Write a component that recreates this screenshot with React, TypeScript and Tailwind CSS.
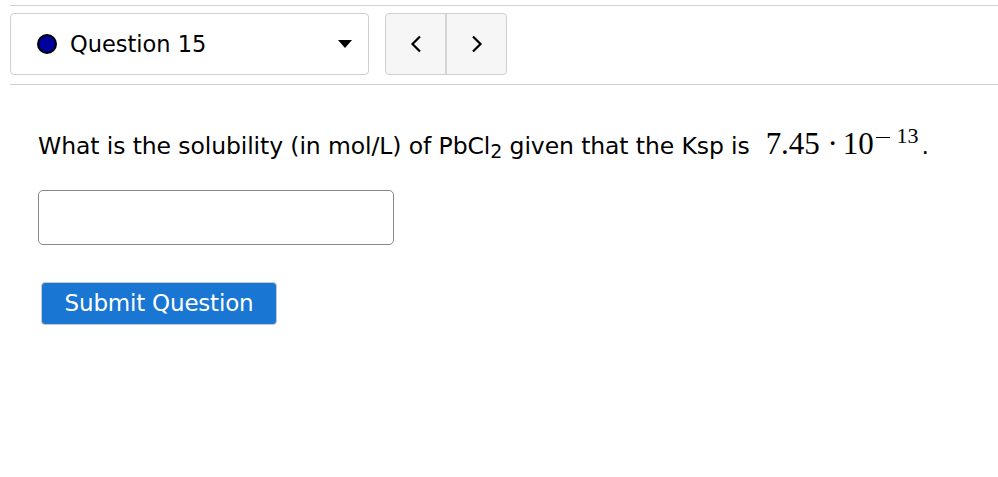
export default function App() {
	return (
		<div className="w-[998px] h-[477px] bg-white text-black" style={{ fontFamily: '"DejaVu Sans", sans-serif' }}>
			<div className="pl-[10px] pt-[5px]">
				<div className="border-t border-[#d0d0d0]" />
				<div className="flex gap-4 pt-[7px] pb-[9px]">
					<div className="w-[359px] h-[62px] border border-[#cfcfcf] rounded-[4px] flex items-center pl-[26px] pr-[16px]">
						<span className="w-[20px] h-[20px] rounded-full bg-[#00009c] border-2 border-black shrink-0" />
						<span className="ml-[13px] text-[22.5px] flex-1 pt-[2px]">Question 15</span>
						<svg width="14" height="8" viewBox="0 0 14 8">
							<path d="M0 0 L14 0 L7 8 Z" fill="black" />
						</svg>
					</div>
					<div className="w-[122px] h-[62px] border border-[#cfcfcf] rounded-[4px] bg-[#f6f6f6] flex">
						<div className="w-[61px] flex items-center justify-center border-r-2 border-[#d4d4d4]">
							<svg width="12" height="18" viewBox="0 0 12 18" fill="none">
								<path d="M10 1.5 L2.5 9 L10 16.5" stroke="black" strokeWidth="2.2" />
							</svg>
						</div>
						<div className="flex-1 flex items-center justify-center">
							<svg width="12" height="18" viewBox="0 0 12 18" fill="none">
								<path d="M2 1.5 L9.5 9 L2 16.5" stroke="black" strokeWidth="2.2" />
							</svg>
						</div>
					</div>
				</div>
				<div className="border-t border-[#d0d0d0]" />
			</div>
			<div className="pl-[38px] pt-[42px]">
				<p className="text-[23.5px] leading-[34px] tracking-[-0.1px] whitespace-nowrap">
					What is the solubility (in mol/L) of PbCl<sub className="text-[19px] relative top-[4px]">2</sub> given that the Ksp is
					<span className="ml-[16px] text-[31px]" style={{ fontFamily: '"Liberation Serif", serif' }}>
						7.45
						<span className="ml-[8px] mr-[5px]">·</span>
						10
						<sup className="text-[22px] ml-[2px] relative top-[-11px]">
							<span className="inline-block w-[14px] border-t-[1.5px] border-black align-middle" />
							<span className="ml-[7px]">13</span>
						</sup>
					</span>
					<span className="ml-[3px]">.</span>
				</p>
				<input className="mt-[27px] block w-[356px] h-[55px] border border-[#888] rounded-[5px]" />
				<button className="mt-[37px] ml-[3px] w-[236px] h-[43px] bg-[#1976d2] text-white text-[23px] tracking-[-0.2px] rounded-[4px] border border-[#c8c8c8]">
					Submit Question
				</button>
			</div>
		</div>
	)
}
